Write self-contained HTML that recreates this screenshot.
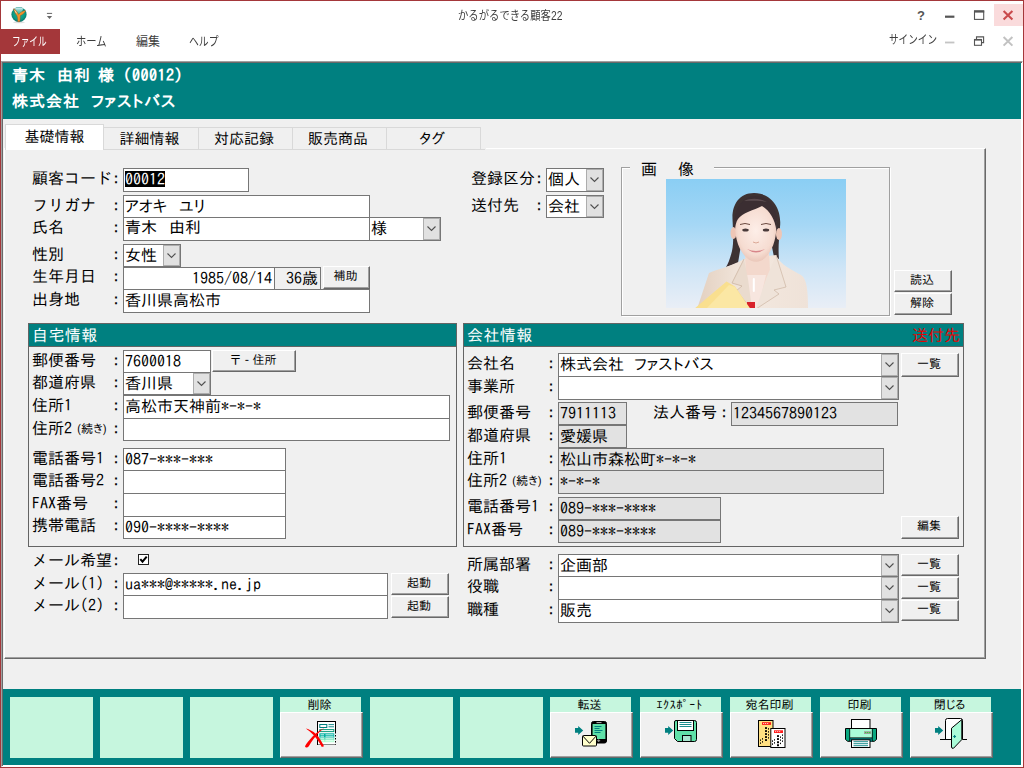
<!DOCTYPE html>
<html lang="ja"><head><meta charset="utf-8"><title>かるがるできる顧客22</title>
<style>
html,body{margin:0;padding:0;background:#fff;}
body{width:1024px;height:768px;overflow:hidden;}
#win{position:relative;width:1024px;height:768px;overflow:hidden;background:#fff;box-sizing:border-box;}
#win:after{content:"";position:absolute;left:0;top:0;width:1022px;height:766px;border:1px solid #a4373a;pointer-events:none;z-index:50;}
#win div,#win svg.abs,#appicon{position:absolute;}
.abs{position:absolute;}
#filetab{left:1px;top:29px;width:59px;height:25px;background:#a4373a;}
#form{left:1px;top:61px;width:1020px;height:704px;background:#f0f0f0;border-style:solid;border-width:1px;border-color:#a0a0a0 #fff #fff #a0a0a0;box-shadow:inset 1px 1px 0 #696969, inset -1px -1px 0 #fff;}
#hdr{left:3px;top:63px;width:1018px;height:56px;background:#008080;}
#h1,#h2{left:9px;color:#fff;font:bold 16px/16px "IPAGothic","Noto Sans CJK JP",monospace;white-space:pre;letter-spacing:1px;}
#h2 .kk{font-family:"IPAPGothic","IPAGothic","Noto Sans CJK JP",sans-serif;letter-spacing:0.8px;}
#h1{top:4px;}
#h2{top:30px;}
#tabbody{left:4px;top:148px;width:980px;height:509px;border-style:solid;border-width:1px 1px 1px 1px;border-color:#fff #696969 #696969 #fff;box-shadow:inset -1px -1px 0 #a0a0a0;box-sizing:content-box;}
#tabbody:before{content:"";position:absolute;left:0;top:-1px;width:481px;height:1px;background:#f0f0f0;}
.tab{top:127px;height:22px;padding-right:3px;box-sizing:border-box;border:1px solid #d9d9d9;border-bottom:none;background:#f0f0f0;font:15px/21px "IPAPGothic","IPAGothic","Noto Sans CJK JP",sans-serif;text-align:center;color:#000;white-space:pre;}
.tab.act{padding-right:0;top:124px;height:26px;background:#fff;line-height:24px;}
.l{margin-left:-1px;font:16px/16px "IPAGothic","Noto Sans CJK JP",monospace;color:#000;white-space:pre;}
.l.sm{font:12px/16px "IPAPGothic","IPAGothic","Noto Sans CJK JP",sans-serif;}
.f{box-sizing:border-box;border:1px solid #767676;background:#fff;font:16px/21px "IPAGothic","Noto Sans CJK JP",monospace;color:#000;white-space:pre;overflow:hidden;padding-left:1px;}
.f.g{background:#e2e2e2;}
.f.g2{background:#f0f0f0;}
.f.p{font-family:"IPAPGothic","IPAGothic","Noto Sans CJK JP",sans-serif;}
.sel{background:#000;color:#fff;}
#win .dd{position:absolute;right:0;top:0;bottom:0;width:15px;background:#e1e1e1;border:1px solid #adadad;display:block;}
#win .dd svg{position:absolute;left:0;top:50%;margin-top:-10px;}
.b{box-sizing:border-box;background:#f0f0f0;padding-right:2px;border-style:solid;border-width:1px;border-color:#fff #696969 #696969 #fff;box-shadow:inset -1px -1px 0 #a0a0a0;font:12px/18px "IPAPGothic","IPAGothic","Noto Sans CJK JP",sans-serif;text-align:center;color:#000;white-space:pre;}
.panel{box-sizing:border-box;border:1px solid #646464;}
.ph{left:0;top:0;right:0;height:22px;background:#008080;color:#fff;font:16px/22px "IPAPGothic","IPAGothic","Noto Sans CJK JP",sans-serif;padding-left:3px;letter-spacing:0.4px;border-bottom:1px solid #646464;white-space:pre;}
#sofu{right:3px;top:0;color:#e60000;font:16px/22px "IPAPGothic","IPAGothic","Noto Sans CJK JP",sans-serif;white-space:pre;}
#gb{left:621px;top:167px;width:267px;height:147px;border:1px solid #a0a0a0;box-shadow:1px 1px 0 #fff, inset 1px 1px 0 #fff;}
#gbl{left:630px;top:165px;width:84px;height:5px;background:#f0f0f0;}
#tb{left:3px;top:689px;width:1018px;height:76px;background:#008080;}
.cell{top:697px;width:83px;height:61px;background:#c6f6de;}
.cl{top:696px;width:79px;height:15px;font:12px/16px "IPAPGothic","IPAGothic","Noto Sans CJK JP",sans-serif;text-align:center;color:#000;white-space:pre;}

.ui{font:12px/18px "Liberation Sans","Noto Sans CJK JP",sans-serif;white-space:pre;transform-origin:0 50%;}
.sp{display:inline-block;overflow:hidden;vertical-align:bottom;white-space:pre;letter-spacing:0;}
.kn{letter-spacing:-0.1px;}

</style></head><body>
<div id="win">
<div class="ui" style="left:458px;top:7px;color:#3d3d3d;transform:scaleX(0.862);">かるがるできる顧客22</div>
<svg id="appicon" width="18" height="18" viewBox="0 0 18 18" style="left:10px;top:6px">
<defs><radialGradient id="ig" cx="0.5" cy="0.45" r="0.55"><stop offset="0" stop-color="#19b79c"/><stop offset="0.7" stop-color="#0c9a84"/><stop offset="1" stop-color="#0a6f66"/></radialGradient>
<linearGradient id="ih" x1="0" y1="0" x2="0" y2="1"><stop offset="0" stop-color="#eaf6ff"/><stop offset="1" stop-color="#7fd0c8" stop-opacity="0.2"/></linearGradient></defs>
<ellipse cx="9" cy="16.3" rx="6" ry="0.9" fill="#000" opacity="0.12"/>
<circle cx="9" cy="8.5" r="7.6" fill="url(#ig)"/>
<path d="M4.6 2.6 Q9 0.2 13.4 2.6 L11.5 6.4 L9 8 L6.6 6 Z" fill="url(#ih)"/>
<path d="M3.6 2.6 C5.6 3.6 7.4 6 8.6 8.4 C10.4 6.2 13 4.6 15.6 4.4 C15.2 6.6 12.6 8.6 10.4 9.6 C10.2 12 10.2 14 9.8 15.8 L7.8 15.8 C7.8 13.6 7.6 11.6 7 9.8 C5.4 8 4 5.4 3.6 2.6 Z" fill="#f0902c" stroke="#8a4a20" stroke-width="0.35"/>
<path d="M4.2 3.4 C5.4 4.6 6.4 6.2 7 7.6 L6 7 C5.2 5.8 4.6 4.6 4.2 3.4 Z" fill="#fff" opacity="0.9"/>
</svg>
<svg class="abs" width="8" height="8" viewBox="0 0 8 8" style="left:46px;top:12px"><rect x="0.9" y="0.9" width="5.2" height="1" fill="#666"/><path d="M0.9 3.9 L6.1 3.9 L3.5 7 Z" fill="#666"/></svg>
<div class="abs" style="left:994px;top:4px;width:29px;height:22px;background:#fadbdc"></div>
<svg class="abs" width="120" height="50" viewBox="0 0 120 50" style="left:904px;top:0px">
<text x="13" y="20" font-family="Liberation Sans, sans-serif" font-weight="bold" font-size="13" fill="#555">?</text>
<rect x="41" y="15.6" width="9.4" height="2.2" fill="#555"/>
<rect x="70.5" y="11" width="9.2" height="8.4" fill="none" stroke="#555" stroke-width="1.1"/><rect x="70" y="10.4" width="10.2" height="2.2" fill="#555"/>
<path d="M99.6 11 L108.4 19.4 M108.4 11 L99.6 19.4" stroke="#c9494c" stroke-width="2.1" fill="none"/>
<rect x="41" y="41.6" width="9.4" height="1.8" fill="#c4c4c4"/>
<path d="M72.5 39 V36.9 H79.6 V42.6 H77.6" fill="none" stroke="#555" stroke-width="1.1"/><rect x="70.5" y="39.5" width="7" height="5.8" fill="none" stroke="#555" stroke-width="1.1"/><rect x="70" y="39" width="8" height="1.6" fill="#555"/>
<path d="M99.6 37 L108.4 45.6 M108.4 37 L99.6 45.6" stroke="#c2c2c2" stroke-width="2" fill="none"/>
</svg>
<div class="ui" style="left:889px;top:31px;color:#3d3d3d;transform:scaleX(0.8);">サインイン</div>
<div id="filetab"></div>
<div class="ui" style="left:12px;top:33px;color:#fff;transform:scaleX(0.72);">ファイル</div>
<div class="ui" style="left:76px;top:33px;color:#3d3d3d;transform:scaleX(0.86);">ホーム</div>
<div class="ui" style="left:136px;top:33px;color:#3d3d3d;transform:scaleX(1.0);">編集</div>
<div class="ui" style="left:189px;top:33px;color:#3d3d3d;transform:scaleX(0.82);">ヘルプ</div>
<div id="form"></div>
<div id="hdr"><div id="h1">青木<span class="sp" style="width:11px">　</span>由利<span class="sp" style="width:7px"> </span>様（<span style="letter-spacing:0.5px">00012</span>）</div><div id="h2">株式会社<span class="sp" style="width:11px">　</span><span class="kk">ファストバス</span></div></div>
<div id="tabbody"></div>
<div class="abs" style="left:5px;top:149px;width:480px;height:1px;background:#d9d9d9"></div>
<div class="tab" style="left:103px;width:96px">詳細情報</div>
<div class="tab" style="left:198px;width:95px">対応記録</div>
<div class="tab" style="left:292px;width:95px">販売商品</div>
<div class="tab" style="left:386px;width:95px">タグ</div>
<div class="tab act" style="left:5px;width:99px">基礎情報</div>
<div class="l " style="left:33px;top:170px;">顧客コード:</div>
<div class="f " style="left:123px;top:168px;width:126px;height:24px;"><span class="sel">00012</span></div>
<div class="l " style="left:33px;top:197px;">フリガナ　:</div>
<div class="f p" style="left:123px;top:195px;width:247px;height:23px;"><span class="kn">アオキ</span><span class="sp" style="width:12px">　</span><span class="kn">ユリ</span></div>
<div class="l " style="left:33px;top:219px;">氏名　　　:</div>
<div class="f " style="left:123px;top:217px;width:247px;height:24px;line-height:19px;">青木<span class="sp" style="width:12px">　</span>由利</div>
<div class="f " style="left:369px;top:217px;width:72px;height:24px;">様<span class="dd"><svg width="15" height="20" viewBox="0 0 15 20"><path d="M3.5 7.5 L7.5 11.5 L11.5 7.5" fill="none" stroke="#505050" stroke-width="1.1"/></svg></span></div>
<div class="l " style="left:33px;top:246px;">性別　　　:</div>
<div class="f " style="left:123px;top:244px;width:58px;height:23px;">女性<span class="dd"><svg width="15" height="20" viewBox="0 0 15 20"><path d="M3.5 7.5 L7.5 11.5 L11.5 7.5" fill="none" stroke="#505050" stroke-width="1.1"/></svg></span></div>
<div class="l " style="left:33px;top:268px;">生年月日　:</div>
<div class="f " style="left:123px;top:267px;width:152px;height:23px;text-align:right;padding-right:2px;">1985/08/14</div>
<div class="f g2" style="left:274px;top:267px;width:47px;height:23px;text-align:right;padding-right:2px;">36歳</div>
<div class="b " style="left:323px;top:266px;width:47px;height:23px;line-height:17px;">補助</div>
<div class="l " style="left:33px;top:291px;">出身地　　:</div>
<div class="f " style="left:123px;top:289px;width:247px;height:24px;">香川県高松市</div>
<div class="l " style="left:472px;top:170px;">登録区分:</div>
<div class="f " style="left:546px;top:168px;width:58px;height:24px;">個人<span class="dd"><svg width="15" height="20" viewBox="0 0 15 20"><path d="M3.5 7.5 L7.5 11.5 L11.5 7.5" fill="none" stroke="#505050" stroke-width="1.1"/></svg></span></div>
<div class="l " style="left:472px;top:197px;">送付先　:</div>
<div class="f " style="left:546px;top:195px;width:58px;height:23px;">会社<span class="dd"><svg width="15" height="20" viewBox="0 0 15 20"><path d="M3.5 7.5 L7.5 11.5 L11.5 7.5" fill="none" stroke="#505050" stroke-width="1.1"/></svg></span></div>
<div id="gb"></div><div id="gbl"></div>
<div class="l " style="left:642px;top:161px;">画<span class="sp" style="width:21px">　</span>像</div>
<svg class="abs" width="180" height="129" viewBox="0 0 180 129" style="left:666px;top:179px">
<defs>
<linearGradient id="sky" x1="0" y1="0" x2="0" y2="1"><stop offset="0" stop-color="#8acef4"/><stop offset="0.35" stop-color="#a5d7f5"/><stop offset="0.7" stop-color="#cfe5f6"/><stop offset="1" stop-color="#e9eef6"/></linearGradient>
<radialGradient id="skin" cx="0.5" cy="0.45" r="0.6"><stop offset="0" stop-color="#fdeee8"/><stop offset="0.7" stop-color="#f6dcd1"/><stop offset="1" stop-color="#e6bfb0"/></radialGradient>
<linearGradient id="jk" x1="0" y1="0" x2="1" y2="0"><stop offset="0" stop-color="#e3d0c0"/><stop offset="0.45" stop-color="#f3e8df"/><stop offset="1" stop-color="#efe2d8"/></linearGradient>
<filter id="b1" x="-10%" y="-10%" width="120%" height="120%"><feGaussianBlur stdDeviation="0.5"/></filter>
<filter id="b0" x="-10%" y="-10%" width="120%" height="120%"><feGaussianBlur stdDeviation="0.35"/></filter>
<filter id="b2" x="-20%" y="-20%" width="140%" height="140%"><feGaussianBlur stdDeviation="1.4"/></filter>
<clipPath id="pc"><rect x="0" y="0" width="180" height="129"/></clipPath>
</defs>
<rect width="180" height="129" fill="url(#sky)"/>
<g clip-path="url(#pc)">
<g filter="url(#b1)">
<!-- hair back -->
<path d="M88 14 C73 14 66 26 66.5 40 C67 52 68 62 66 72 C64 80 62 85 60 88 L72 84 L76 60 L104 58 L108 78 L113 80 C112 70 113 60 114 48 C116 30 106 14 88 14 Z" fill="#3d3033"/>
<!-- jacket -->
<path d="M31 130 L43 94 C52 90 66 87 78 80 L110 76 C114 86 128 92 135 96 C141 100 142 112 142 130 Z" fill="url(#jk)"/>
<!-- neck / inner -->
<path d="M79 74 L103 74 L104 92 L96 112 L89 130 L82 130 L80 100 Z" fill="#f3d8cc"/>
<path d="M80 96 L84 130 L92 130 L100 96 Z" fill="#f7e6df"/>
<!-- lapels -->
<path d="M78 80 L66 104 L76 107 L70 112 L86 130 L82 100 Z" fill="#eadbce"/>
<path d="M110 76 L120 108 L108 111 L113 115 L90 130 L100 100 Z" fill="#efe3d9"/>
<path d="M78 80 L66 104 L76 107 L70 112 L86 130" fill="none" stroke="#c9b09c" stroke-width="0.7"/>
<path d="M110 76 L120 108 L108 111 L113 115 L90 130" fill="none" stroke="#cdb6a3" stroke-width="0.7"/>
<!-- red -->
<rect x="81" y="123" width="8" height="7" fill="#d8232a"/>
<!-- pendant -->
<rect x="86.8" y="99" width="2" height="14" rx="1" fill="#ffffff"/>
<!-- ears -->
<ellipse cx="67.5" cy="54" rx="3" ry="6" fill="#eec6b6"/>
<ellipse cx="113" cy="55" rx="3" ry="6" fill="#eec6b6"/>
<!-- face -->
<path d="M69 46 C69 30 78 26 90 26 C103 26 111 32 110.5 48 C110 62 106 72 99 79 C94 84 86 84 81 79 C73 72 69 60 69 46 Z" fill="url(#skin)"/>
<!-- hair front -->
<path d="M69 50 C67 34 74 18 89 17 C105 17 113 32 110.5 52 C109 40 104 32 96 27 C88 31 76 34 72 40 C70 43 69.5 46 69 50 Z" fill="#3a2e31"/>
<path d="M78 22 C84 19 94 19 101 23 C95 21.5 85 21.5 78 22 Z" fill="#6a5a5c" opacity="0.7"/>
</g>
<g filter="url(#b0)">
<!-- brows -->
<path d="M74 45.5 Q79 43.5 84 45.5" stroke="#6a4a40" stroke-width="1" fill="none"/>
<path d="M95 45.5 Q100 43.5 105 45.5" stroke="#6a4a40" stroke-width="1" fill="none"/>
<!-- eyes -->
<ellipse cx="79.5" cy="51" rx="3.2" ry="1.5" fill="#4a3b3a"/>
<ellipse cx="100" cy="51" rx="3.2" ry="1.5" fill="#4a3b3a"/>
<!-- nose -->
<path d="M87 63 Q90 65 93 63" stroke="#dba896" stroke-width="1" fill="none"/>
<!-- mouth -->
<path d="M81 70 Q90 74 99 70 Q90 77 81 70 Z" fill="#d8868a"/>
</g>
<!-- envelope -->
<path d="M28 130 L60.5 102.5 L69 107.5 L84.5 130 Z" fill="#f9df8f" filter="url(#b1)"/>
<path d="M40 130 L63 106 L69 108 L84 130 Z" fill="#fbe7a4" filter="url(#b1)"/>
</g>
</svg>
<div class="b " style="left:894px;top:270px;width:58px;height:22px;line-height:16px;">読込</div>
<div class="b " style="left:894px;top:293px;width:58px;height:22px;line-height:16px;">解除</div>
<div class="panel" style="left:28px;top:323px;width:429px;height:224px"><div class="ph">自宅情報</div></div>
<div class="l " style="left:33px;top:352px;">郵便番号　:</div>
<div class="f " style="left:123px;top:350px;width:88px;height:23px;">7600018</div>
<div class="b " style="left:212px;top:350px;width:84px;height:22px;line-height:16px;">〒 - 住所</div>
<div class="l " style="left:33px;top:374px;">都道府県　:</div>
<div class="f " style="left:123px;top:372px;width:88px;height:23px;">香川県<span class="dd"><svg width="15" height="20" viewBox="0 0 15 20"><path d="M3.5 7.5 L7.5 11.5 L11.5 7.5" fill="none" stroke="#505050" stroke-width="1.1"/></svg></span></div>
<div class="l " style="left:33px;top:397px;">住所1 　　:</div>
<div class="f " style="left:123px;top:395px;width:327px;height:24px;">高松市天神前*-*-*</div>
<div class="l " style="left:33px;top:420px;">住所2</div>
<div class="l sm" style="left:78px;top:420px;">(続き)</div>
<div class="l " style="left:113px;top:420px;">:</div>
<div class="f " style="left:123px;top:418px;width:327px;height:23px;"></div>
<div class="l " style="left:33px;top:450px;">電話番号1 :</div>
<div class="f " style="left:123px;top:448px;width:163px;height:23px;">087-***-***</div>
<div class="l " style="left:33px;top:472px;">電話番号2 :</div>
<div class="f " style="left:123px;top:470px;width:163px;height:24px;"></div>
<div class="l " style="left:33px;top:495px;">FAX番号　 :</div>
<div class="f " style="left:123px;top:493px;width:163px;height:24px;"></div>
<div class="l " style="left:33px;top:517px;">携帯電話　:</div>
<div class="f " style="left:123px;top:516px;width:163px;height:23px;">090-****-****</div>
<div class="l " style="left:33px;top:552px;">メール希望:</div>
<svg class="abs" width="11" height="11" viewBox="0 0 11 11" style="left:138px;top:554px"><rect x="0.5" y="0.5" width="10" height="10" fill="#fff" stroke="#222" stroke-width="1"/><path d="M2.3 5.2 L4.5 7.7 L8.7 2.6" fill="none" stroke="#000" stroke-width="2"/></svg>
<div class="l " style="left:33px;top:575px;">メール(1) :</div>
<div class="f " style="left:123px;top:573px;width:265px;height:23px;">ua***@*****.ne.jp</div>
<div class="b " style="left:391px;top:573px;width:58px;height:22px;line-height:16px;">起動</div>
<div class="l " style="left:33px;top:597px;">メール(2) :</div>
<div class="f " style="left:123px;top:595px;width:265px;height:24px;"></div>
<div class="b " style="left:391px;top:596px;width:58px;height:22px;line-height:16px;">起動</div>
<div class="panel" style="left:463px;top:323px;width:501px;height:224px"><div class="ph">会社情報</div><div id="sofu">送付先</div></div>
<div class="l " style="left:468px;top:355px;">会社名　　:</div>
<div class="f p" style="left:558px;top:353px;width:341px;height:24px;">株式会社<span class="sp" style="width:10px">　</span><span class="kn">ファストバス</span><span class="dd"><svg width="15" height="20" viewBox="0 0 15 20"><path d="M3.5 7.5 L7.5 11.5 L11.5 7.5" fill="none" stroke="#505050" stroke-width="1.1"/></svg></span></div>
<div class="b " style="left:901px;top:353px;width:58px;height:24px;line-height:18px;">一覧</div>
<div class="l " style="left:468px;top:378px;">事業所　　:</div>
<div class="f " style="left:558px;top:376px;width:341px;height:24px;"><span class="dd"><svg width="15" height="20" viewBox="0 0 15 20"><path d="M3.5 7.5 L7.5 11.5 L11.5 7.5" fill="none" stroke="#505050" stroke-width="1.1"/></svg></span></div>
<div class="l " style="left:468px;top:404px;">郵便番号　:</div>
<div class="f g" style="left:558px;top:402px;width:69px;height:23px;">7911113</div>
<div class="l " style="left:654px;top:404px;">法人番号</div>
<div class="l " style="left:721px;top:404px;">:</div>
<div class="f g" style="left:731px;top:402px;width:167px;height:24px;">1234567890123</div>
<div class="l " style="left:468px;top:427px;">都道府県　:</div>
<div class="f g" style="left:558px;top:425px;width:69px;height:23px;">愛媛県</div>
<div class="l " style="left:468px;top:450px;">住所1 　　:</div>
<div class="f g" style="left:558px;top:448px;width:326px;height:23px;">松山市森松町*-*-*</div>
<div class="l " style="left:468px;top:472px;">住所2</div>
<div class="l sm" style="left:513px;top:472px;">(続き)</div>
<div class="l " style="left:548px;top:472px;">:</div>
<div class="f g" style="left:558px;top:470px;width:326px;height:24px;">*-*-*</div>
<div class="l " style="left:468px;top:498px;">電話番号1 :</div>
<div class="f g" style="left:558px;top:497px;width:163px;height:23px;">089-***-****</div>
<div class="l " style="left:468px;top:521px;">FAX番号　 :</div>
<div class="f g" style="left:558px;top:520px;width:163px;height:23px;">089-***-****</div>
<div class="b " style="left:901px;top:516px;width:58px;height:23px;line-height:17px;">編集</div>
<div class="l " style="left:468px;top:556px;">所属部署　:</div>
<div class="f " style="left:558px;top:554px;width:341px;height:23px;">企画部<span class="dd"><svg width="15" height="20" viewBox="0 0 15 20"><path d="M3.5 7.5 L7.5 11.5 L11.5 7.5" fill="none" stroke="#505050" stroke-width="1.1"/></svg></span></div>
<div class="b " style="left:901px;top:554px;width:58px;height:22px;line-height:16px;">一覧</div>
<div class="l " style="left:468px;top:578px;">役職　　　:</div>
<div class="f " style="left:558px;top:576px;width:341px;height:24px;"><span class="dd"><svg width="15" height="20" viewBox="0 0 15 20"><path d="M3.5 7.5 L7.5 11.5 L11.5 7.5" fill="none" stroke="#505050" stroke-width="1.1"/></svg></span></div>
<div class="b " style="left:901px;top:577px;width:58px;height:22px;line-height:16px;">一覧</div>
<div class="l " style="left:468px;top:601px;">職種　　　:</div>
<div class="f " style="left:558px;top:599px;width:341px;height:24px;">販売<span class="dd"><svg width="15" height="20" viewBox="0 0 15 20"><path d="M3.5 7.5 L7.5 11.5 L11.5 7.5" fill="none" stroke="#505050" stroke-width="1.1"/></svg></span></div>
<div class="b " style="left:901px;top:600px;width:58px;height:21px;line-height:15px;">一覧</div>
<div id="tb"></div>
<div class="cell" style="left:10px"></div>
<div class="cell" style="left:100px"></div>
<div class="cell" style="left:190px"></div>
<div class="cell" style="left:280px;width:81px;height:16px"></div>
<div class="cl" style="left:280px">削除</div>
<div class="b big" style="left:280px;top:712px;width:83px;height:46px"><svg class="abs" width="83" height="46" viewBox="0 0 83 46" style="left:-1px;top:-1px">
<rect x="37.5" y="9.5" width="18" height="23" fill="#fff" stroke="#000" stroke-width="1"/>
<path d="M55.5 20 V32.5" stroke="#f0f0f0" stroke-width="1.2"/>
<path d="M55.5 20 V32.5" stroke="#000" stroke-width="1" stroke-dasharray="1.5 1.5"/>
<path d="M38 32.5 H55" stroke="#8a8a8a" stroke-width="1"/>
<path d="M37.5 28 V32.8" stroke="#000" stroke-width="1" stroke-dasharray="1.5 1.5"/>
<rect x="39.8" y="12.5" width="7" height="3" fill="#fff" stroke="#007f7f" stroke-width="1"/>
<path d="M48.5 12.6 H54 M48.5 14.8 H54" stroke="#007f7f" stroke-width="0.9"/>
<rect x="39.8" y="17.6" width="14" height="2" fill="#fff" stroke="#0a9a7a" stroke-width="1"/>
<rect x="39.3" y="21.3" width="15" height="4.4" fill="#00b0a0"/>
<rect x="39.3" y="25.7" width="15" height="2.2" fill="#66e0b8"/>
<rect x="39.3" y="27.9" width="15" height="2.3" fill="#aaffd0"/>
<path d="M40.5 22.8 H44 M45.5 22.8 H53.5 M40.5 24.8 H44 M45.5 24.8 H53.5 M40.5 26.8 H44 M45.5 26.8 H53.5 M40.5 28.8 H44 M45.5 28.8 H53.5" stroke="#fff" stroke-width="0.8"/>
<path d="M25.8 16.6 C31.5 18 36.5 21.5 39.6 26.5 C41.6 29.6 43 32.2 44 34.2 L41.8 34.9 C39.6 31 36.6 26.3 33 22.6 C30.8 20.3 28.3 18.3 25.8 16.6 Z" fill="#ff0000"/>
<path d="M44.2 15.9 C38 18.6 33 23.6 29.3 28.2 C27.2 30.8 25.4 33 25 34.6 C25.6 36 27.6 35.6 28.8 34.2 C31.4 29.8 35 24.6 39 20.6 C40.6 18.9 42.4 17.2 44.2 15.9 Z" fill="#ff0000"/>
</svg></div>
<div class="cell" style="left:370px"></div>
<div class="cell" style="left:460px"></div>
<div class="cell" style="left:550px;width:81px;height:16px"></div>
<div class="cl" style="left:550px">転送</div>
<div class="b big" style="left:550px;top:712px;width:83px;height:46px"><svg class="abs" width="83" height="46" viewBox="0 0 83 46" style="left:-1px;top:-1px"><path d="M25 16 H28.2 V14 L33.2 18.4 L28.2 23 V20.8 H25 Z" fill="#008080"/>
<rect x="41.5" y="9.5" width="15" height="21.5" rx="2" fill="#000" stroke="#000" stroke-width="1"/>
<rect x="42.6" y="12" width="12.8" height="15" fill="#5fe0a8"/>
<path d="M46.5 10.6 H51.5" stroke="#bbb" stroke-width="1"/>
<path d="M44.5 14.5 H51.5 M44.5 16.5 H49.5 M44.5 18.5 H52.5 M44.5 20.5 H50.5" stroke="#008080" stroke-width="1"/>
<path d="M47.2 28.7 H50.2 M48.7 27.4 V30" stroke="#999" stroke-width="1"/>
<rect x="32.5" y="23.5" width="14" height="10.5" rx="1" fill="#ffffcc" stroke="#000" stroke-width="1"/>
<path d="M32.8 24 L39.5 31.3 L46.2 24" fill="none" stroke="#000" stroke-width="1"/>
</svg></div>
<div class="cell" style="left:640px;width:81px;height:16px"></div>
<div class="cl" style="left:640px"><span style="letter-spacing:0.7px;font-family:IPAGothic,monospace">ｴｸｽﾎﾟｰﾄ</span></div>
<div class="b big" style="left:640px;top:712px;width:83px;height:46px"><svg class="abs" width="83" height="46" viewBox="0 0 83 46" style="left:-1px;top:-1px"><path d="M25 16 H28.2 V14 L33.2 18.4 L28.2 23 V20.8 H25 Z" fill="#008080"/>
<path d="M36 8.5 H54.5 Q56.5 8.5 56.5 10.5 V27.5 Q56.5 29.5 54.5 29.5 H37.5 L34.5 26.5 V10 Q34.5 8.5 36 8.5 Z" fill="#5fe0a8" stroke="#000" stroke-width="1"/>
<rect x="37.5" y="8.5" width="16" height="10" fill="#fff" stroke="#000" stroke-width="1"/>
<path d="M39.5 10.5 H51.5 M39.5 12.5 H51.5 M39.5 14.5 H51.5" stroke="#008080" stroke-width="0.9"/>
<rect x="42.5" y="23.5" width="8.5" height="6" fill="#a8e6cf" stroke="#000" stroke-width="1"/>
</svg></div>
<div class="cell" style="left:730px;width:81px;height:16px"></div>
<div class="cl" style="left:730px">宛名印刷</div>
<div class="b big" style="left:730px;top:712px;width:83px;height:46px"><svg class="abs" width="83" height="46" viewBox="0 0 83 46" style="left:-1px;top:-1px">
<rect x="28.5" y="8.5" width="14.5" height="26" fill="#ffe082" stroke="#000" stroke-width="1"/>
<rect x="32" y="10.2" width="9" height="2.7" fill="#ff1a1a"/>
<path d="M33.2 11.5 h1 m1 0 h1 m1 0 h1" stroke="#fff" stroke-width="0.9"/>
<rect x="35" y="15" width="2" height="2" rx="0.4" fill="#000"/><rect x="35" y="18" width="2" height="2" rx="0.4" fill="#000"/><rect x="35" y="21" width="2" height="2" rx="0.4" fill="#000"/><rect x="35" y="24" width="2" height="2" rx="0.4" fill="#000"/><rect x="35" y="27" width="2" height="2" rx="0.4" fill="#000"/><rect x="38" y="16" width="1" height="1.7" rx="0.4" fill="#000"/><rect x="38" y="19" width="1" height="1.7" rx="0.4" fill="#000"/><rect x="38" y="22" width="1" height="1.7" rx="0.4" fill="#000"/><rect x="38" y="25" width="1" height="1.7" rx="0.4" fill="#000"/><rect x="30" y="27.3" width="1" height="1.7" rx="0.4" fill="#000"/><rect x="30" y="30.3" width="1" height="1.7" rx="0.4" fill="#000"/><rect x="32" y="26" width="1" height="1.7" rx="0.4" fill="#000"/><rect x="32" y="29" width="1" height="1.7" rx="0.4" fill="#000"/>
<rect x="40.8" y="16.5" width="14.2" height="19" fill="#fff" stroke="#000" stroke-width="1"/>
<rect x="44" y="18.3" width="9" height="2.7" fill="#ff1a1a"/>
<path d="M45.2 19.6 h1 m1 0 h1 m1 0 h1" stroke="#fff" stroke-width="0.9"/>
<rect x="47" y="23" width="2" height="2" rx="0.4" fill="#000"/><rect x="47" y="26" width="2" height="2" rx="0.4" fill="#000"/><rect x="47" y="29.2" width="2" height="2" rx="0.4" fill="#000"/><rect x="47" y="32.2" width="2" height="2" rx="0.4" fill="#000"/><rect x="50" y="24.3" width="1" height="1.7" rx="0.4" fill="#000"/><rect x="50" y="27.3" width="1" height="1.7" rx="0.4" fill="#000"/><rect x="50" y="30.5" width="1" height="1.7" rx="0.4" fill="#000"/><rect x="52" y="22.3" width="1" height="1.7" rx="0.4" fill="#000"/><rect x="52" y="25.3" width="1" height="1.7" rx="0.4" fill="#000"/><rect x="52" y="28.3" width="1" height="1.7" rx="0.4" fill="#000"/><rect x="42" y="28.2" width="1" height="1.7" rx="0.4" fill="#000"/><rect x="42" y="31.2" width="1" height="1.7" rx="0.4" fill="#000"/><rect x="44" y="27" width="1" height="1.7" rx="0.4" fill="#000"/><rect x="44" y="30" width="1" height="1.7" rx="0.4" fill="#000"/>
</svg></div>
<div class="cell" style="left:820px;width:81px;height:16px"></div>
<div class="cl" style="left:820px">印刷</div>
<div class="b big" style="left:820px;top:712px;width:83px;height:46px"><svg class="abs" width="83" height="46" viewBox="0 0 83 46" style="left:-1px;top:-1px">
<path d="M25.5 16.5 H56.5 V27.3 L54.5 29.3 H27.5 L25.5 27.3 Z" fill="#0aa880" stroke="#000" stroke-width="1"/>
<rect x="30" y="17" width="22" height="9" fill="#aafcd8"/>
<rect x="30" y="26" width="22" height="3.5" fill="#008888"/>
<path d="M29.7 17 V29 M52.3 17 V29" stroke="#000" stroke-width="0.8"/>
<path d="M30 25.8 H52" stroke="#000" stroke-width="0.8"/>
<rect x="44" y="19.2" width="7" height="2.8" fill="#a0a0a0"/>
<path d="M45.3 20.6 h0.9 m1.1 0 h0.9 m1.1 0 h0.9" stroke="#00e000" stroke-width="1"/>
<rect x="31.5" y="7.5" width="18.5" height="9" fill="#fff" stroke="#000" stroke-width="1"/>
<rect x="31.5" y="27.8" width="18.5" height="7.7" fill="#fff" stroke="#000" stroke-width="1"/>
<path d="M33.5 29.7 H48 M33.5 31.7 H48 M33.5 33.7 H48" stroke="#008080" stroke-width="0.9"/>
</svg></div>
<div class="cell" style="left:910px;width:81px;height:16px"></div>
<div class="cl" style="left:910px">閉じる</div>
<div class="b big" style="left:910px;top:712px;width:83px;height:46px"><svg class="abs" width="83" height="46" viewBox="0 0 83 46" style="left:-1px;top:-1px"><path d="M25 16 H28.2 V14 L33.2 18.4 L28.2 23 V20.8 H25 Z" fill="#008080"/>
<path d="M35.5 27.5 V8.5 Q35.5 6.5 37.5 6.5 H50.5 Q52.5 6.5 52.5 8.5 V27.5" fill="#fff" stroke="#000" stroke-width="1"/>
<path d="M30 27.5 H41.5 M52.5 27.5 H57" stroke="#000" stroke-width="1"/>
<path d="M41.5 16.2 L51.8 7.6 V27.6 L43.6 36.2 Q41.5 36.8 41.5 35 Z" fill="#aafcd8" stroke="#000" stroke-width="1" stroke-linejoin="round"/>
<path d="M43.2 24.5 H46 M44.6 23.1 V25.9" stroke="#008080" stroke-width="1.1"/>
</svg></div>
</div>
</body></html>
